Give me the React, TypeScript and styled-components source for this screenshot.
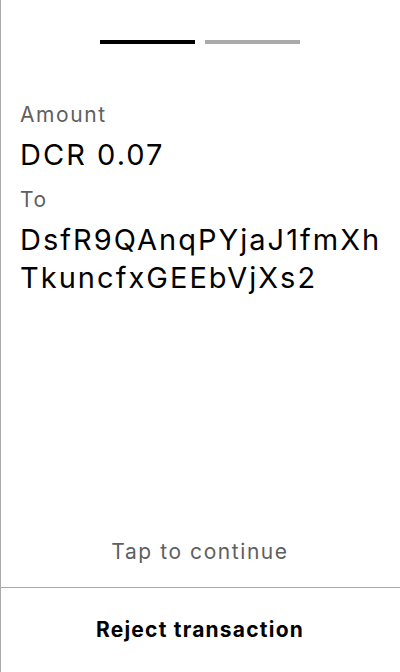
import React from "react";
import styled, { createGlobalStyle } from "styled-components";

const GlobalStyle = createGlobalStyle`
  html, body {
    margin: 0;
    padding: 0;
    background: #ffffff;
  }
  body {
    font-family: Inter, "Noto Sans", "Liberation Sans", sans-serif;
    -webkit-font-smoothing: antialiased;
  }
  * { box-sizing: border-box; }
`;

const Screen = styled.div`
  display: flex;
  flex-direction: column;
  height: 100vh;
  box-shadow: inset 1px 0 0 #aaaaaa;
  background: #ffffff;
`;

const Progress = styled.div`
  display: flex;
  justify-content: center;
  gap: 10px;
  padding-top: 40px;
`;

const Step = styled.div<{ $active?: boolean }>`
  width: 95px;
  height: 4px;
  background: ${(p) => (p.$active ? "#000000" : "#aaaaaa")};
`;

const Details = styled.div`
  display: flex;
  flex-direction: column;
  padding: 59px 20px 0 20px;
`;

const Label = styled.div`
  font-size: 21px;
  line-height: 24px;
  letter-spacing: 0.075em;
  color: #5f5f5f;
  margin-bottom: 9px;
`;

const Value = styled.div`
  font-size: 29px;
  line-height: 38.5px;
  letter-spacing: 0.07em;
  color: #000000;
  margin-bottom: 13px;
`;

const AddressLine = styled.span`
  display: block;
  white-space: nowrap;
`;

const Spacer = styled.div`
  flex: 1;
`;

const TapHint = styled.div`
  text-align: center;
  font-size: 21px;
  line-height: 24px;
  letter-spacing: 0.075em;
  color: #5f5f5f;
  margin-bottom: 23px;
`;

const Footer = styled.button`
  display: flex;
  align-items: center;
  justify-content: center;
  height: 85px;
  border: none;
  border-top: 1px solid #aaaaaa;
  background: transparent;
  font-family: inherit;
  font-size: 21px;
  line-height: 24px;
  font-weight: 700;
  letter-spacing: 0.058em;
  color: #000000;
  padding: 0;
`;

export default function App() {
  return (
    <>
      <GlobalStyle />
      <Screen>
        <Progress>
          <Step $active />
          <Step />
        </Progress>
        <Details>
          <Label>Amount</Label>
          <Value>DCR 0.07</Value>
          <Label>To</Label>
          <Value>
            <AddressLine>DsfR9QAnqPYjaJ1fmXh</AddressLine>
            <AddressLine>TkuncfxGEEbVjXs2</AddressLine>
          </Value>
        </Details>
        <Spacer />
        <TapHint>Tap to continue</TapHint>
        <Footer>Reject transaction</Footer>
      </Screen>
    </>
  );
}
